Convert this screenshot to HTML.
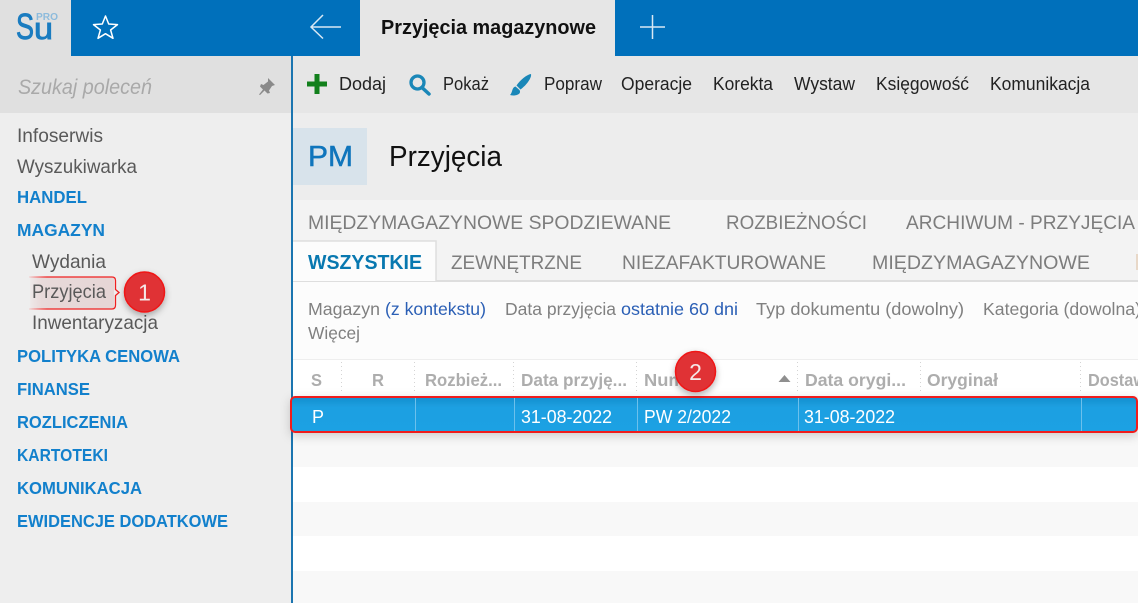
<!DOCTYPE html>
<html lang="pl"><head><meta charset="utf-8"><title>Przyjęcia magazynowe</title>
<style>
html,body{margin:0;padding:0;width:1138px;height:603px;overflow:hidden;background:#fff}
svg{display:block}
text{font-family:"Liberation Sans",sans-serif;font-size:18px}
.nav{fill:#595959;font-size:19.5px}
.mod{fill:#1280cc;font-weight:bold;font-size:17.5px}
.tb{fill:#222;font-size:18px}
.tab{fill:#7d7d7d;font-size:19.5px}
.flt{fill:#808080;font-size:17.5px}
.lnk{fill:#2b5fb5;font-size:17.5px}
.th{fill:#adadad;font-size:17.5px;font-weight:bold}
.td{fill:#fff;font-size:18px}
</style></head><body>
<svg width="1138" height="603" viewBox="0 0 1138 603" xmlns="http://www.w3.org/2000/svg">
<defs>
<linearGradient id="row" x1="0" y1="0" x2="0" y2="1"><stop offset="0" stop-color="#178fce"/><stop offset=".3" stop-color="#1ba0e2"/><stop offset="1" stop-color="#1ba1e3"/></linearGradient>
<filter id="sh" x="-30%" y="-30%" width="160%" height="170%"><feDropShadow dx="0" dy="3" stdDeviation="3.5" flood-color="#000" flood-opacity=".3"/></filter>
<filter id="sh2" x="-3%" y="-30%" width="106%" height="170%"><feDropShadow dx="0" dy="3" stdDeviation="5" flood-color="#000" flood-opacity=".18"/></filter>
<linearGradient id="hl" x1="0" y1="0" x2="1" y2="0"><stop offset="0" stop-color="#e06060" stop-opacity=".03"/><stop offset=".15" stop-color="#c88" stop-opacity=".2"/><stop offset="1" stop-color="#c88" stop-opacity=".24"/></linearGradient>
<linearGradient id="hs" x1="0" y1="0" x2="1" y2="0"><stop offset="0" stop-color="#f00" stop-opacity=".1"/><stop offset=".2" stop-color="#f02020"/><stop offset="1" stop-color="#f02020"/></linearGradient>
</defs>

<!-- backgrounds -->
<rect width="1138" height="603" fill="#fff"/>
<rect x="0" y="0" width="1138" height="56" fill="#0070bb"/>
<rect x="0" y="0" width="71" height="56" fill="#e0e0e0"/>
<rect x="0" y="56" width="291" height="57" fill="#e0e0e0"/>
<rect x="0" y="113" width="291" height="490" fill="#eeeeee"/>
<rect x="293" y="56" width="845" height="57" fill="#e6e6e6"/>
<rect x="293" y="113" width="845" height="87" fill="#ededed"/>
<rect x="293" y="200" width="845" height="81" fill="#f3f3f3"/>
<rect x="293" y="281" width="845" height="78" fill="#fcfcfc"/>
<rect x="293" y="359" width="845" height="1" fill="#eeeeee"/>
<rect x="293" y="432" width="845" height="35" fill="#f8f8f8"/>
<rect x="293" y="502" width="845" height="34" fill="#f8f8f8"/>
<rect x="293" y="571" width="845" height="32" fill="#f8f8f8"/>
<rect x="291" y="56" width="2" height="547" fill="#1b75b0"/>
<rect x="360" y="0" width="255" height="56" fill="#e6e6e6"/>

<!-- logo -->
<text x="16" y="39" style="font-size:36px;fill:#1a7cc0" stroke="#1a7cc0" stroke-width=".9" textLength="18" lengthAdjust="spacingAndGlyphs">S</text>
<text x="34" y="39" style="font-size:31px;fill:#1a7cc0" stroke="#1a7cc0" stroke-width=".9" textLength="19" lengthAdjust="spacingAndGlyphs">u</text>
<text x="36" y="20" style="font-size:10px;fill:#8dbbdc;font-weight:bold" textLength="22" lengthAdjust="spacingAndGlyphs">PRO</text>
<!-- star -->
<path d="M105.500 16L108.700 24L117.500 24.600L110.600 30L113 38.300L105.500 33.700L98 38.300L100.400 30L93.500 24.600L102.300 24Z" fill="none" stroke="#fff" stroke-width="1.500" stroke-linejoin="round"/>
<!-- back arrow -->
<path d="M341 27H311M323 15L311 27L323 38.500" fill="none" stroke="#d8e8f4" stroke-width="1.500"/>
<!-- plus -->
<path d="M652.500 15V39M640 27H665" fill="none" stroke="#d8e8f4" stroke-width="1.500"/>
<text x="381" y="34" style="font-size:20.500px;fill:#111;font-weight:bold" textLength="215" lengthAdjust="spacingAndGlyphs">Przyjęcia magazynowe</text>

<!-- search -->
<text x="18" y="94" style="font-size:21.500px;font-style:italic;fill:#a9a9a9" textLength="134" lengthAdjust="spacingAndGlyphs">Szukaj poleceń</text>
<path d="M268 78L275 85L272 86L269 90.500L270 93L267.500 93.500L264.500 90.500L260 95L259 94.500L263 89.500L260 86.500L261 84L263.500 85L268 81.500Z" fill="#8a8a8a"/>

<!-- sidebar -->
<text class="nav" x="17" y="142" textLength="86" lengthAdjust="spacingAndGlyphs">Infoserwis</text>
<text class="nav" x="17" y="173" textLength="120" lengthAdjust="spacingAndGlyphs">Wyszukiwarka</text>
<text class="mod" x="17" y="203" textLength="70" lengthAdjust="spacingAndGlyphs">HANDEL</text>
<text class="mod" x="17" y="236" textLength="88" lengthAdjust="spacingAndGlyphs">MAGAZYN</text>
<text class="nav" x="32" y="268" textLength="74" lengthAdjust="spacingAndGlyphs">Wydania</text>
<rect x="30" y="277" width="84" height="32" fill="url(#hl)"/>
<path d="M29 277H112Q115.500 277 115.500 280.500V289.500L119 292.500L115.500 295.500V305Q115.500 309 112 309H29" fill="none" stroke="url(#hs)" stroke-width="1.300"/>
<text class="nav" x="32" y="298" textLength="74" lengthAdjust="spacingAndGlyphs">Przyjęcia</text>
<text class="nav" x="32" y="329" textLength="126" lengthAdjust="spacingAndGlyphs">Inwentaryzacja</text>
<text class="mod" x="17" y="362" textLength="163" lengthAdjust="spacingAndGlyphs">POLITYKA CENOWA</text>
<text class="mod" x="17" y="395" textLength="73" lengthAdjust="spacingAndGlyphs">FINANSE</text>
<text class="mod" x="17" y="428" textLength="111" lengthAdjust="spacingAndGlyphs">ROZLICZENIA</text>
<text class="mod" x="17" y="461" textLength="91" lengthAdjust="spacingAndGlyphs">KARTOTEKI</text>
<text class="mod" x="17" y="494" textLength="125" lengthAdjust="spacingAndGlyphs">KOMUNIKACJA</text>
<text class="mod" x="17" y="527" textLength="211" lengthAdjust="spacingAndGlyphs">EWIDENCJE DODATKOWE</text>

<!-- toolbar -->
<path d="M317 74V94M307 84H327" stroke="#12801c" stroke-width="5" fill="none"/>
<text class="tb" x="339" y="90" textLength="47" lengthAdjust="spacingAndGlyphs">Dodaj</text>
<circle cx="417.500" cy="82.500" r="6.500" fill="none" stroke="#1a87b8" stroke-width="3.300"/>
<path d="M422.500 88L429 94" stroke="#1a87b8" stroke-width="3.500" stroke-linecap="round"/>
<text class="tb" x="443" y="90" textLength="46" lengthAdjust="spacingAndGlyphs">Pokaż</text>
<path d="M531 74C527 74.500 520 80 516.500 85.500L520.500 89.500C526 85.500 532 78 531 74ZM515.500 86.500C511.500 87.500 513 92 510 95C515 96.500 522 94.500 519.500 90Z" fill="#1a87b8"/>
<text class="tb" x="544" y="90" textLength="58" lengthAdjust="spacingAndGlyphs">Popraw</text>
<text class="tb" x="621" y="90" textLength="71" lengthAdjust="spacingAndGlyphs">Operacje</text>
<text class="tb" x="713" y="90" textLength="60" lengthAdjust="spacingAndGlyphs">Korekta</text>
<text class="tb" x="794" y="90" textLength="61" lengthAdjust="spacingAndGlyphs">Wystaw</text>
<text class="tb" x="876" y="90" textLength="93" lengthAdjust="spacingAndGlyphs">Księgowość</text>
<text class="tb" x="990" y="90" textLength="100" lengthAdjust="spacingAndGlyphs">Komunikacja</text>

<!-- title -->
<rect x="293" y="128" width="74" height="57" fill="#d8e3eb"/>
<text x="308" y="166" style="font-size:29px;fill:#0f75bc" textLength="45" lengthAdjust="spacingAndGlyphs" stroke="#0f75bc" stroke-width=".5">PM</text>
<text x="389" y="166" style="font-size:29px;fill:#111" textLength="113" lengthAdjust="spacingAndGlyphs">Przyjęcia</text>

<!-- tabs -->
<text class="tab" x="308" y="229" textLength="363" lengthAdjust="spacingAndGlyphs">MIĘDZYMAGAZYNOWE SPODZIEWANE</text>
<text class="tab" x="726" y="229" textLength="141" lengthAdjust="spacingAndGlyphs">ROZBIEŻNOŚCI</text>
<text class="tab" x="906" y="229" textLength="229" lengthAdjust="spacingAndGlyphs">ARCHIWUM - PRZYJĘCIA</text>
<rect x="293" y="280" width="845" height="2" fill="#dedede"/>
<path d="M293 241H436V281H293Z" fill="#fcfcfc"/>
<path d="M293 241H436V281" fill="none" stroke="#dedede" stroke-width="1.500"/>
<text x="308" y="269" style="font-size:20px;font-weight:bold;fill:#0878b0" textLength="114" lengthAdjust="spacingAndGlyphs">WSZYSTKIE</text>
<text class="tab" x="451" y="269" textLength="131" lengthAdjust="spacingAndGlyphs">ZEWNĘTRZNE</text>
<text class="tab" x="622" y="269" textLength="204" lengthAdjust="spacingAndGlyphs">NIEZAFAKTUROWANE</text>
<text class="tab" x="872" y="269" textLength="218" lengthAdjust="spacingAndGlyphs">MIĘDZYMAGAZYNOWE</text>
<rect x="1136" y="254" width="2" height="16" fill="#e8d8c8"/>

<!-- filters -->
<text class="flt" x="308" y="315" textLength="72" lengthAdjust="spacingAndGlyphs">Magazyn</text>
<text class="lnk" x="385" y="315" textLength="101" lengthAdjust="spacingAndGlyphs">(z kontekstu)</text>
<text class="flt" x="505" y="315" textLength="111" lengthAdjust="spacingAndGlyphs">Data przyjęcia</text>
<text class="lnk" x="621" y="315" textLength="117" lengthAdjust="spacingAndGlyphs">ostatnie 60 dni</text>
<text class="flt" x="756" y="315" textLength="208" lengthAdjust="spacingAndGlyphs">Typ dokumentu (dowolny)</text>
<text class="flt" x="983" y="315" textLength="158" lengthAdjust="spacingAndGlyphs">Kategoria (dowolna)</text>
<text class="flt" x="308" y="339" textLength="52" lengthAdjust="spacingAndGlyphs">Więcej</text>

<!-- grid header -->
<g stroke="#d4d4d4" stroke-dasharray="1 3" stroke-width="1">
<path d="M341.500 362V394M414.500 362V394M513.500 362V394M636.500 362V394M797.500 362V394M920.500 362V394M1080.500 362V394"/>
</g>
<text class="th" x="311" y="386" textLength="11" lengthAdjust="spacingAndGlyphs">S</text>
<text class="th" x="372" y="386" textLength="12" lengthAdjust="spacingAndGlyphs">R</text>
<text class="th" x="425" y="386" textLength="77" lengthAdjust="spacingAndGlyphs">Rozbież...</text>
<text class="th" x="521" y="386" textLength="106" lengthAdjust="spacingAndGlyphs">Data przyję...</text>
<text class="th" x="644" y="386" textLength="58" lengthAdjust="spacingAndGlyphs">Numer</text>
<path d="M778.500 382L784.500 375L790.500 382Z" fill="#8f8f8f"/>
<text class="th" x="805" y="386" textLength="101" lengthAdjust="spacingAndGlyphs">Data orygi...</text>
<text class="th" x="927" y="386" textLength="71" lengthAdjust="spacingAndGlyphs">Oryginał</text>
<text class="th" x="1088" y="386" textLength="58" lengthAdjust="spacingAndGlyphs">Dostaw</text>

<!-- selected row -->
<rect x="291" y="397" width="846" height="35" rx="4" fill="url(#row)" stroke="#f01b1b" stroke-width="2" filter="url(#sh2)"/>
<path d="M415.500 398V431M514.500 398V431M637.500 398V431M798.500 398V431M1081.500 398V431" stroke="#6cc0ec" stroke-width="1"/>
<text class="td" x="312" y="423" style="font-size:18px">P</text>
<text class="td" x="521" y="423" textLength="91" lengthAdjust="spacingAndGlyphs">31-08-2022</text>
<text class="td" x="644" y="423" textLength="87" lengthAdjust="spacingAndGlyphs">PW 2/2022</text>
<text class="td" x="804" y="423" textLength="91" lengthAdjust="spacingAndGlyphs">31-08-2022</text>

<!-- markers -->
<circle cx="144.500" cy="292" r="20" fill="#e03236" stroke="#f01414" stroke-width="1.500" filter="url(#sh)"/>
<text x="144.500" y="300.500" text-anchor="middle" style="font-size:23px;fill:#f5e8e8">1</text>
<circle cx="695.500" cy="371.500" r="20" fill="#e03236" stroke="#f01414" stroke-width="1.500" filter="url(#sh)"/>
<text x="695.500" y="380" text-anchor="middle" style="font-size:23px;fill:#f5e8e8">2</text>
</svg>
</body></html>
